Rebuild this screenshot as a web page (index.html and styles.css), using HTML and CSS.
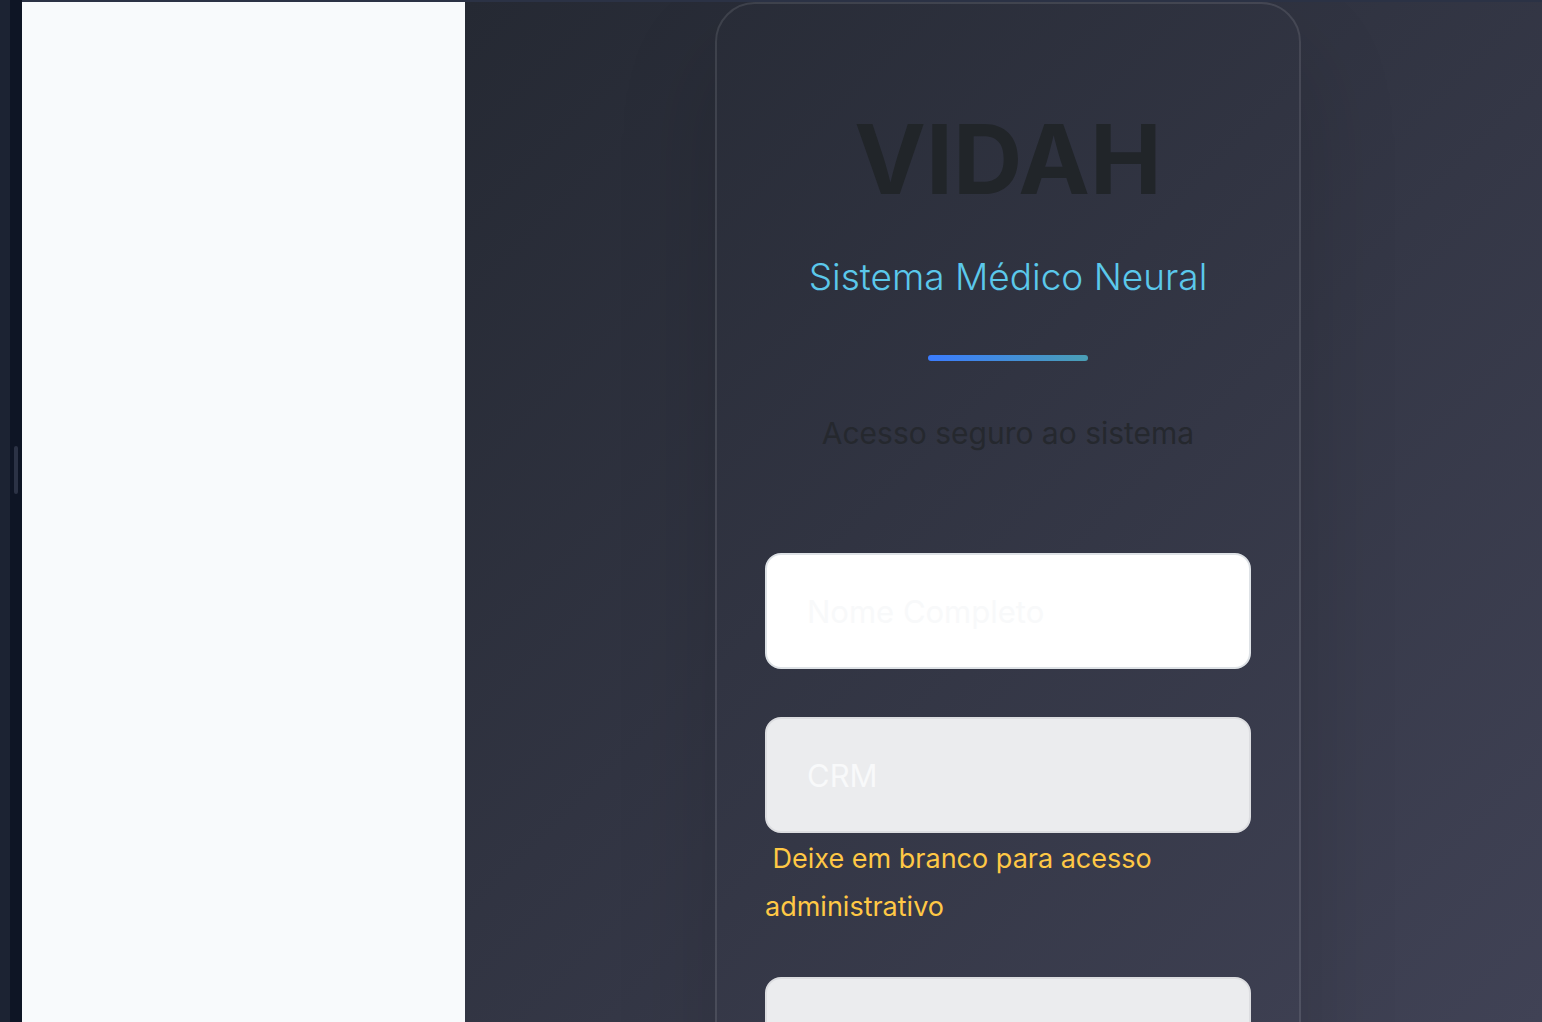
FILE: index.html
```html
<!DOCTYPE html>
<html lang="pt-BR">
<head>
<meta charset="utf-8">
<meta name="viewport" content="width=device-width, initial-scale=1">
<title>VIDAH - Sistema Médico Neural</title>
<link rel="stylesheet" href="styles.css">
</head>
<body>
<div class="workspace">
  <div class="rail"></div>
  <div class="splitter"><span class="grip"></span></div>
  <div class="page">
    <aside class="blank"></aside>
    <main class="stage">
      <section class="card">
        <header class="brand">
          <h1 class="title">VIDAH</h1>
          <p class="subtitle">Sistema Médico Neural</p>
          <div class="rule"></div>
          <p class="note">Acesso seguro ao sistema</p>
        </header>
        <form class="form">
          <div class="field">
            <input class="control control-active" type="text" placeholder="Nome Completo" aria-label="Nome Completo">
          </div>
          <div class="field">
            <input class="control" type="text" placeholder="CRM" aria-label="CRM" aria-describedby="crm-help">
            <small class="help" id="crm-help">&nbsp;Deixe em branco para acesso administrativo</small>
          </div>
          <div class="field">
            <input class="control" type="password" aria-label="Senha">
          </div>
        </form>
      </section>
    </main>
  </div>
</div>
</body>
</html>
```
FILE: styles.css
```css
* { box-sizing: border-box; }

body {
  margin: 0;
  font-family: Inter, "Liberation Sans", sans-serif;
  color: #212529;
  background: #0e1525;
}

.workspace {
  display: flex;
  height: 100vh;
  overflow: hidden;
}

.rail {
  flex: 0 0 10px;
  background: #1c2333;
}

.splitter {
  flex: 0 0 12px;
  display: flex;
  align-items: flex-start;
  justify-content: center;
  padding-top: 446px;
  background: #0e1525;
}

.grip {
  width: 4px;
  height: 48px;
  border-radius: 2px;
  background: #2b3245;
}

.page {
  flex: 1;
  display: flex;
  min-width: 0;
  border-top: 2px solid #2b3245;
}

.blank {
  flex: 0 0 443px;
  background: #f8fafc;
}

.stage {
  flex: 1;
  display: flex;
  justify-content: center;
  align-items: flex-start;
  padding-left: 9px;
  overflow: hidden;
  background: linear-gradient(135deg, #252933 0%, #404255 100%);
}

.card {
  flex: 0 1 586px;
  padding: 98px 48px;
  border: 2px solid rgba(255, 255, 255, 0.1);
  border-radius: 40px;
  box-shadow: 0 50px 100px rgba(0, 0, 0, 0.15);
}

.brand {
  text-align: center;
}

.title {
  margin: 0 0 30px;
  font-size: 96px;
  line-height: 115px;
  font-weight: 700;
}

.subtitle {
  margin: 0 0 48px;
  font-size: 37px;
  line-height: 60px;
  font-weight: 350;
  color: #5bc8eb;
}

.rule {
  width: 160px;
  height: 6px;
  margin: 0 auto 48px;
  border-radius: 3px;
  background: linear-gradient(90deg, #3b7cff, #4a9fb5);
}

.note {
  margin: 0 0 96px;
  font-size: 30px;
  line-height: 48px;
  color: #25282e;
}

.field {
  margin-bottom: 48px;
  font-size: 31px;
  line-height: 48px;
}

.control {
  display: block;
  width: 100%;
  height: 116px;
  padding: 0 40px;
  border: 2px solid #dcdde0;
  border-radius: 16px;
  font: inherit;
  color: #212529;
  background: #ebecee;
  outline: none;
}

.control-active {
  border-color: #dee2e6;
  background: #fff;
}

.control::placeholder {
  color: #f8f9fa;
  opacity: 1;
}

.help {
  font-size: 27px;
  line-height: 40px;
  color: #ffc845;
}
```
